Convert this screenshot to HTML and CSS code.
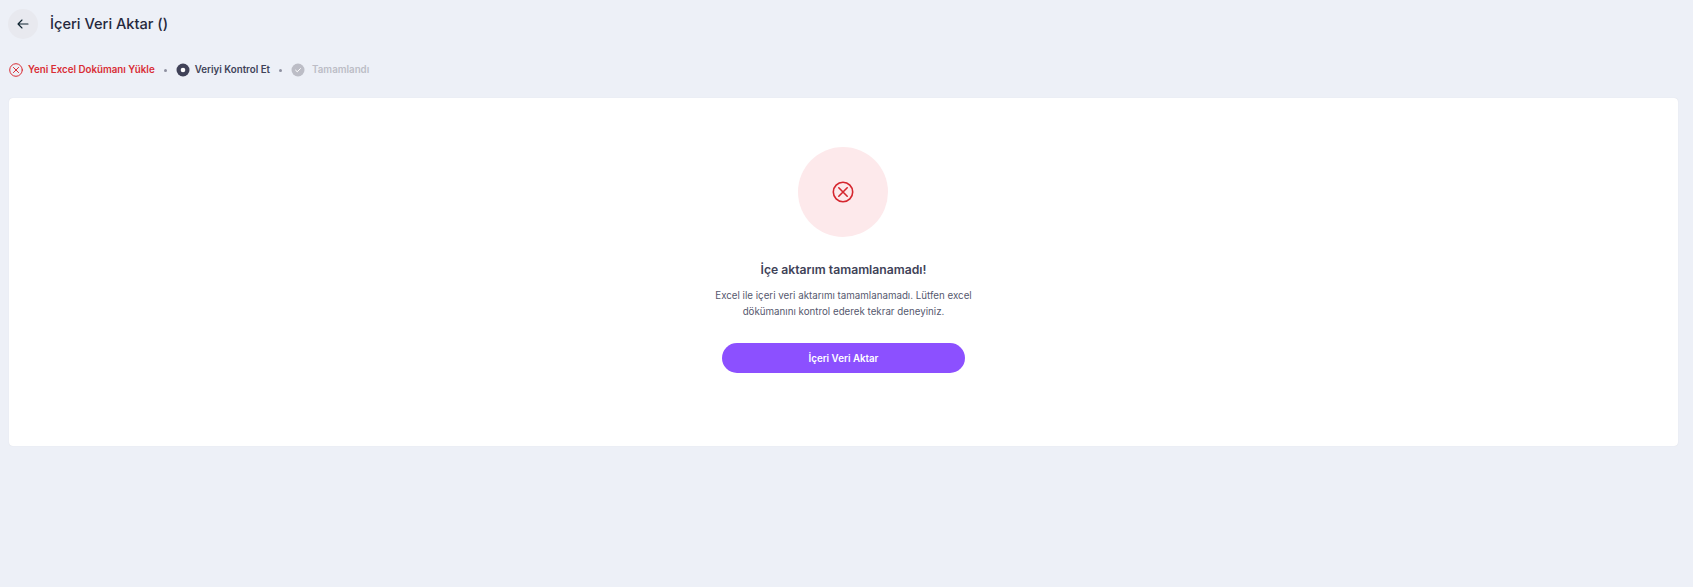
FILE: index.html
```html
<!DOCTYPE html>
<html lang="en">
<head>
    <meta charset="UTF-8">
    <title>İçeri Veri Aktar</title>
    <link rel="stylesheet" href="styles.css">
</head>
<body>
    <header class="page-header">
        <a href="#" class="back-btn">
            <svg width="16" height="16" viewBox="0 0 16 16" fill="none" stroke="#0f2430" stroke-width="1.1" stroke-linecap="round" stroke-linejoin="round">
                <path d="M13 8H3M7 4 3 8l4 4"/>
            </svg>
        </a>
        <h1 class="page-title">İçeri Veri Aktar ()</h1>
    </header>

    <div class="steps">
        <div class="step step-error">
            <svg class="step-icon" viewBox="0 0 14 14" fill="none" stroke="#d92d35" stroke-width="1" stroke-linecap="round">
                <circle cx="7" cy="7" r="6.3"/>
                <path d="M4.4 4.4l5.2 5.2M9.6 4.4l-5.2 5.2"/>
            </svg>
            <span>Yeni Excel Dokümanı Yükle</span>
        </div>
        <div class="step-dot"></div>
        <div class="step step-current">
            <svg class="step-icon" viewBox="0 0 14 14">
                <circle cx="7" cy="7" r="6.5" fill="#404258"/>
                <circle cx="7" cy="7" r="2.3" fill="#fff"/>
            </svg>
            <span>Veriyi Kontrol Et</span>
        </div>
        <div class="step-dot"></div>
        <div class="step step-waiting">
            <svg class="step-icon" viewBox="0 0 14 14" fill="none">
                <circle cx="7" cy="7" r="6.5" fill="#bcbdc6"/>
                <path d="M4.6 7.2l1.7 1.6 3.1-3.2" stroke="#fff" stroke-width="1" stroke-linecap="round" stroke-linejoin="round"/>
            </svg>
            <span>Tamamlandı</span>
        </div>
    </div>

    <main class="card">
        <div class="result-circle">
            <svg width="22" height="22" viewBox="0 0 22 22" fill="none" stroke="#d5262e" stroke-width="1.6" stroke-linecap="round">
                <circle cx="11" cy="11" r="9.7"/>
                <path d="M6.8 6.8l8.4 8.4M15.2 6.8l-8.4 8.4"/>
            </svg>
        </div>
        <h2 class="result-title">İçe aktarım tamamlanamadı!</h2>
        <p class="result-text">Excel ile içeri veri aktarımı tamamlanamadı. Lütfen excel<br>dökümanını kontrol ederek tekrar deneyiniz.</p>
        <button class="primary-btn">İçeri Veri Aktar</button>
    </main>
</body>
</html>
```

FILE: styles.css
```css
body {
    margin: 0;
    min-height: 587px;
    background-color: #edf0f7;
    font-family: 'Inter', 'Noto Sans', sans-serif;
    color: #404258;
    box-sizing: border-box;
    padding: 9px 15px 0 9px;
    overflow: hidden;
}

.page-header {
    display: flex;
    align-items: center;
    gap: 12px;
    height: 30px;
    margin-left: -1px;
}

.back-btn {
    width: 30px;
    height: 30px;
    border-radius: 50%;
    background-color: #e8e9ef;
    display: flex;
    align-items: center;
    justify-content: center;
}

.page-title {
    margin: 0;
    font-size: 14.625px;
    font-weight: 500;
    color: #25283d;
}

.steps {
    display: flex;
    align-items: center;
    gap: 9px;
    height: 14px;
    margin-top: 24px;
}

.step {
    display: flex;
    align-items: center;
    gap: 5px;
    font-size: 9.75px;
    line-height: 12px;
    font-weight: 600;
}

.step span {
    margin-bottom: 1px;
}

.step-icon {
    width: 14px;
    height: 14px;
}

.step-error {
    color: #d92d35;
}

.step-current {
    color: #404258;
}

.step-waiting {
    gap: 7px;
    color: #bcbdc6;
}

.step-dot {
    width: 3px;
    height: 3px;
    border-radius: 50%;
    background-color: #8e90a0;
}

.card {
    margin-top: 21px;
    height: 348px;
    background-color: #fff;
    border-radius: 4px;
    box-shadow: 0 0 1px rgba(64, 66, 88, 0.15);
    display: flex;
    flex-direction: column;
    align-items: center;
    padding-top: 49px;
    box-sizing: border-box;
}

.result-circle {
    width: 90px;
    height: 90px;
    margin-right: 1px;
    border-radius: 50%;
    background-color: #fde9eb;
    display: flex;
    align-items: center;
    justify-content: center;
}

.result-title {
    margin: 24px 0 0;
    font-size: 12.19px;
    line-height: 18px;
    font-weight: 600;
    color: #404258;
}

.result-text {
    margin: 9px 0 0;
    font-size: 9.75px;
    line-height: 15.5px;
    text-align: center;
    color: #55586e;
}

.primary-btn {
    margin-top: 24px;
    width: 243px;
    height: 30px;
    border: 0;
    border-radius: 15px;
    background-color: #8c50ff;
    color: #fff;
    font-family: inherit;
    font-size: 9.75px;
    font-weight: 600;
}
```
